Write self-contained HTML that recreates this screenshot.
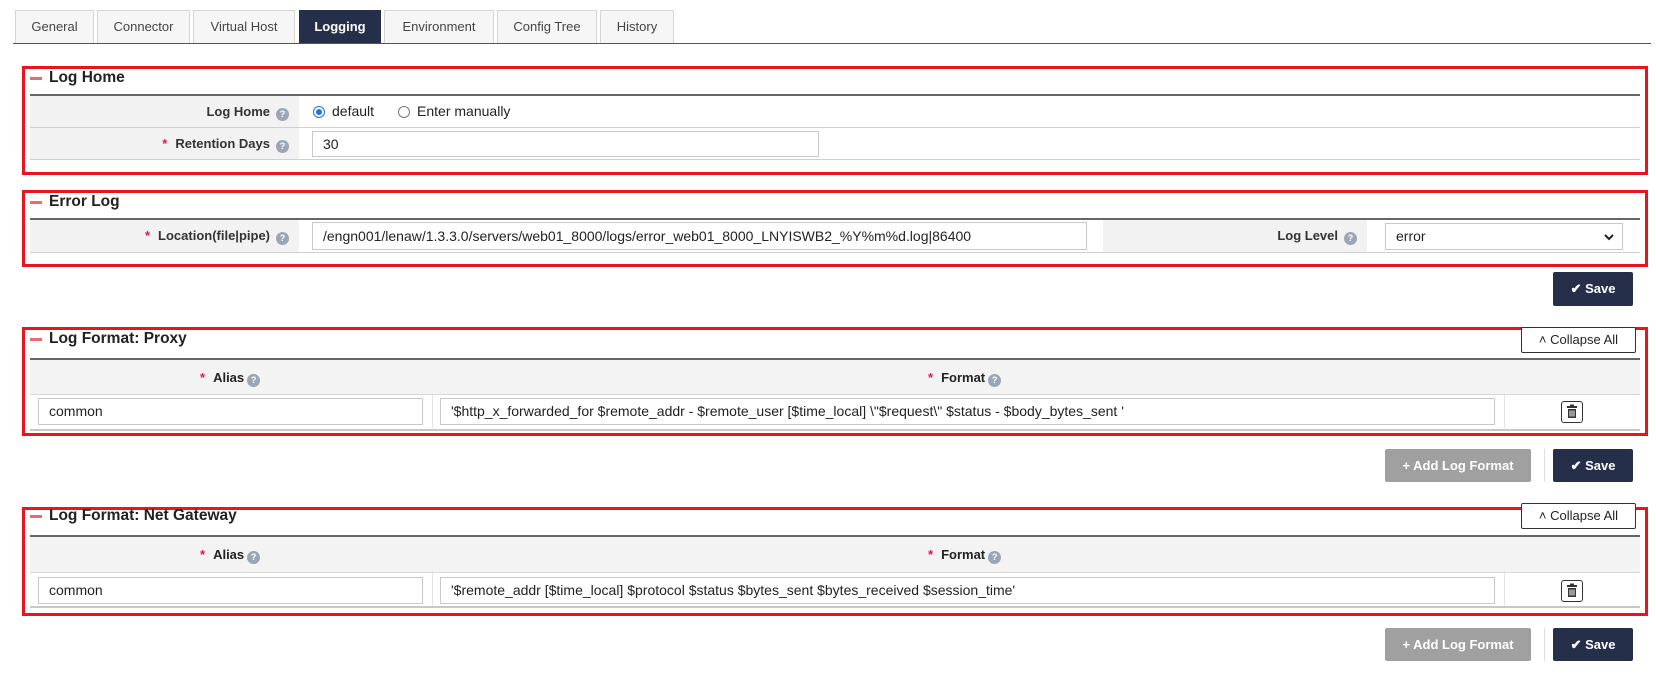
<!DOCTYPE html>
<html><head><meta charset="utf-8"><style>
*{box-sizing:border-box;margin:0;padding:0}
body{width:1656px;height:679px;background:#fff;font-family:"Liberation Sans",sans-serif;font-size:13px;color:#222;position:relative;overflow:hidden}
.a{position:absolute}
.tab{position:absolute;top:10px;height:33px;border:1px solid #d5d5d5;border-bottom:none;background:#f5f6f5;color:#444;text-align:center;line-height:31px;font-size:13px}
.tab.on{background:#262f4a;color:#fff;font-weight:bold;border-color:#262f4a}
.box{position:absolute;left:22px;width:1626px;border:3px solid #e8141e}
.title{position:absolute;left:8px;font-weight:bold;font-size:15.5px;color:#222}
.minus{position:absolute;width:12px;height:3px;background:#ec6a6a}
.hl{position:absolute;left:30px;width:1610px;height:2px;background:#666}
.row{position:absolute;left:30px;width:1610px;border-bottom:1px solid #d0d0d0}
.lbl{position:absolute;background:#f2f2f2;text-align:right;font-weight:bold;color:#333;padding-right:10px}
.q{display:inline-block;width:13px;height:13px;border-radius:50%;background:#9aa6b6;color:#fff;font-size:9px;line-height:13px;text-align:center;vertical-align:-1px;margin-left:6px;font-weight:bold}
.st{color:#e8144e;margin-right:8px}
.inp{position:absolute;border:1px solid #c8c8c8;background:#fff;padding-left:10px;font-size:14px;color:#222}
.btn{position:absolute;color:#fff;font-weight:bold;text-align:center;border-radius:2px;font-size:13px}
.save{background:#262f4a}
.add{background:#a0a0a0}
.coll{position:absolute;border:1px solid #333;border-radius:2px;background:#fff;text-align:center;font-size:13px;color:#222}
.radio{display:inline-block;width:12px;height:12px;border:1px solid #777;border-radius:50%;vertical-align:-2px;margin-right:7px;position:relative}
.radio.on{border-color:#1a73e8}
.radio.on:after{content:"";position:absolute;left:2px;top:2px;width:6px;height:6px;border-radius:50%;background:#1a73e8}
.trash{position:absolute;width:22px;height:22px;border:1px solid #333;border-radius:3px;background:#fff}
</style></head><body>
<div class="tab" style="left:15px;width:79px">General</div>
<div class="tab" style="left:97px;width:93px">Connector</div>
<div class="tab" style="left:193px;width:102px">Virtual Host</div>
<div class="tab on" style="left:299px;width:82px">Logging</div>
<div class="tab" style="left:384px;width:110px">Environment</div>
<div class="tab" style="left:497px;width:100px">Config Tree</div>
<div class="tab" style="left:600px;width:74px">History</div>
<div class="a" style="left:13px;top:43px;width:1638px;height:1px;background:#555"></div>

<!-- Box 1 -->
<div class="box" style="top:66px;height:109px"></div>
<div class="minus" style="left:30px;top:77px"></div>
<div class="title" style="left:49px;top:69px">Log Home</div>
<div class="hl" style="top:94px"></div>
<div class="row" style="top:96px;height:32px"></div>
<div class="lbl" style="left:30px;top:96px;width:269px;height:31px;line-height:31px">Log Home<span class="q">?</span></div>
<div class="a" style="left:313px;top:96px;line-height:31px;font-size:14px"><span class="radio on"></span>default<span class="radio" style="margin-left:24px"></span>Enter manually</div>
<div class="row" style="top:128px;height:32px"></div>
<div class="lbl" style="left:30px;top:128px;width:269px;height:31px;line-height:31px"><span class="st">*</span>Retention Days<span class="q">?</span></div>
<div class="inp" style="left:312px;top:131px;width:507px;height:26px;line-height:24px">30</div>

<!-- Box 2 -->
<div class="box" style="top:190px;height:77px"></div>
<div class="minus" style="left:30px;top:201px"></div>
<div class="title" style="left:49px;top:193px">Error Log</div>
<div class="hl" style="top:218px"></div>
<div class="row" style="top:220px;height:33px"></div>
<div class="lbl" style="left:30px;top:220px;width:269px;height:32px;line-height:32px"><span class="st">*</span>Location(file|pipe)<span class="q">?</span></div>
<div class="inp" style="left:312px;top:222px;width:775px;height:28px;line-height:26px">/engn001/lenaw/1.3.3.0/servers/web01_8000/logs/error_web01_8000_LNYISWB2_%Y%m%d.log|86400</div>
<div class="lbl" style="left:1103px;top:220px;width:264px;height:32px;line-height:32px">Log Level<span class="q">?</span></div>
<div class="inp" style="left:1385px;top:223px;width:238px;height:27px;line-height:25px">error<svg style="position:absolute;right:8px;top:9px" width="10" height="8" viewBox="0 0 10 8"><path d="M1 2 L5 6 L9 2" stroke="#222" stroke-width="2" fill="none"/></svg></div>
<div class="btn save" style="left:1553px;top:272px;width:80px;height:34px;line-height:34px">&#10004; Save</div>

<!-- Box 3 -->
<div class="box" style="top:327px;height:109px"></div>
<div class="minus" style="left:30px;top:338px"></div>
<div class="title" style="left:49px;top:330px">Log Format: Proxy</div>
<div class="coll" style="left:1521px;top:327px;width:115px;height:26px;line-height:24px">&#708; Collapse All</div>
<div class="hl" style="top:358px"></div>
<div class="a" style="left:30px;top:360px;width:1610px;height:35px;background:#f3f3f3;border-bottom:1px solid #d8d8d8"></div>
<div class="a" style="left:200px;top:360px;line-height:35px;font-weight:bold"><span class="st">*</span>Alias<span class="q" style="margin-left:3px">?</span></div>
<div class="a" style="left:928px;top:360px;line-height:35px;font-weight:bold"><span class="st">*</span>Format<span class="q" style="margin-left:3px">?</span></div>
<div class="row" style="top:395px;height:36px;border-bottom:2px solid #c8c8c8"></div>
<div class="a" style="left:432px;top:395px;width:1px;height:35px;background:#e4e4e4"></div>
<div class="a" style="left:1504px;top:395px;width:1px;height:35px;background:#e4e4e4"></div>
<div class="inp" style="left:38px;top:398px;width:385px;height:27px;line-height:25px">common</div>
<div class="inp" style="left:440px;top:398px;width:1055px;height:27px;line-height:25px">'$http_x_forwarded_for $remote_addr - $remote_user [$time_local] \"$request\" $status - $body_bytes_sent '</div>
<div class="trash" style="left:1561px;top:401px"><svg width="20" height="20" viewBox="0 0 20 20"><rect x="5" y="4" width="10" height="2" fill="#333"/><rect x="8" y="2.5" width="4" height="2" fill="#333"/><rect x="6" y="7" width="8" height="9" fill="#333"/><rect x="7.5" y="8.5" width="1" height="6" fill="#fff"/><rect x="9.5" y="8.5" width="1" height="6" fill="#fff"/><rect x="11.5" y="8.5" width="1" height="6" fill="#fff"/></svg></div>
<div class="btn add" style="left:1385px;top:449px;width:146px;height:33px;line-height:33px">+ Add Log Format</div>
<div class="a" style="left:1544px;top:449px;width:1px;height:33px;background:#ddd"></div>
<div class="btn save" style="left:1553px;top:449px;width:80px;height:33px;line-height:33px">&#10004; Save</div>

<!-- Box 4 -->
<div class="box" style="top:507px;height:109px"></div>
<div class="minus" style="left:30px;top:515px"></div>
<div class="title" style="left:49px;top:507px">Log Format: Net Gateway</div>
<div class="coll" style="left:1521px;top:503px;width:115px;height:26px;line-height:24px">&#708; Collapse All</div>
<div class="hl" style="top:535px"></div>
<div class="a" style="left:30px;top:537px;width:1610px;height:36px;background:#f3f3f3;border-bottom:1px solid #d8d8d8"></div>
<div class="a" style="left:200px;top:537px;line-height:36px;font-weight:bold"><span class="st">*</span>Alias<span class="q" style="margin-left:3px">?</span></div>
<div class="a" style="left:928px;top:537px;line-height:36px;font-weight:bold"><span class="st">*</span>Format<span class="q" style="margin-left:3px">?</span></div>
<div class="row" style="top:573px;height:35px;border-bottom:2px solid #c8c8c8"></div>
<div class="a" style="left:432px;top:573px;width:1px;height:33px;background:#e4e4e4"></div>
<div class="a" style="left:1504px;top:573px;width:1px;height:33px;background:#e4e4e4"></div>
<div class="inp" style="left:38px;top:577px;width:385px;height:27px;line-height:25px">common</div>
<div class="inp" style="left:440px;top:577px;width:1055px;height:27px;line-height:25px">'$remote_addr [$time_local] $protocol $status $bytes_sent $bytes_received $session_time'</div>
<div class="trash" style="left:1561px;top:580px"><svg width="20" height="20" viewBox="0 0 20 20"><rect x="5" y="4" width="10" height="2" fill="#333"/><rect x="8" y="2.5" width="4" height="2" fill="#333"/><rect x="6" y="7" width="8" height="9" fill="#333"/><rect x="7.5" y="8.5" width="1" height="6" fill="#fff"/><rect x="9.5" y="8.5" width="1" height="6" fill="#fff"/><rect x="11.5" y="8.5" width="1" height="6" fill="#fff"/></svg></div>
<div class="btn add" style="left:1385px;top:628px;width:146px;height:33px;line-height:33px">+ Add Log Format</div>
<div class="a" style="left:1544px;top:628px;width:1px;height:33px;background:#ddd"></div>
<div class="btn save" style="left:1553px;top:628px;width:80px;height:33px;line-height:33px">&#10004; Save</div>
</body></html>
